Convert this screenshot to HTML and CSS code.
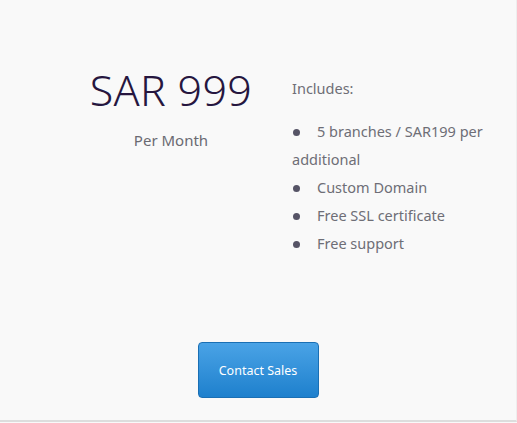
FILE: index.html
```html
<!DOCTYPE html>
<html>
<head>
<meta charset="utf-8">
<link rel="stylesheet" href="styles.css">
</head>
<body>
<div class="page">
  <div class="plan">
    <div class="price-col">
      <div class="price">SAR 999</div>
      <div class="period">Per Month</div>
    </div>
    <div class="features">
      <div class="includes">Includes:</div>
      <ul class="list">
        <li>5 branches / SAR199 per additional</li>
        <li>Custom Domain</li>
        <li>Free SSL certificate</li>
        <li>Free support</li>
      </ul>
    </div>
  </div>
  <div class="actions">
    <button class="btn">Contact Sales</button>
  </div>
</div>
</body>
</html>
```
FILE: styles.css
```css
html, body {
  margin: 0;
  padding: 0;
  background: #f9f9f9;
}
body {
  font-family: "Noto Sans", "Open Sans", sans-serif;
  color: #666;
}
.page {
  width: 516px;
  height: 420px;
  border-right: 1px solid #eee;
  border-bottom: 2px solid #ddd;
  box-sizing: content-box;
  display: flex;
  flex-direction: column;
}
.plan {
  display: flex;
  padding-top: 62px;
  height: 280px;
}
.price-col {
  width: 292px;
  padding-left: 50px;
  box-sizing: border-box;
  display: flex;
  flex-direction: column;
  align-items: center;
}
.price {
  font-size: 43px;
  font-weight: 300;
  color: #26163f;
  line-height: 56px;
  letter-spacing: 0.3px;
}
.period {
  font-size: 15px;
  color: #6a6a72;
  margin-top: 12px;
}
.features {
  width: 200px;
  font-size: 14.5px;
  color: #6e6e76;
}
.includes {
  margin-top: 16px;
  line-height: 20px;
}
.list {
  list-style: none;
  padding: 0;
  margin: 19px 0 0;
  line-height: 28px;
}
.list li::before {
  content: "";
  display: inline-block;
  width: 7px;
  height: 7px;
  border-radius: 50%;
  background: #565466;
  margin: 0 17px 2px 1px;
  vertical-align: middle;
}
.actions {
  display: flex;
  justify-content: center;
}
.btn {
  width: 121px;
  height: 56px;
  border: 1px solid #1a6fb4;
  border-radius: 4px;
  background: linear-gradient(#4aa3e6, #1e80cd);
  color: #fff;
  font-family: "Noto Sans", sans-serif;
  font-size: 12.5px;
  cursor: pointer;
}
```
